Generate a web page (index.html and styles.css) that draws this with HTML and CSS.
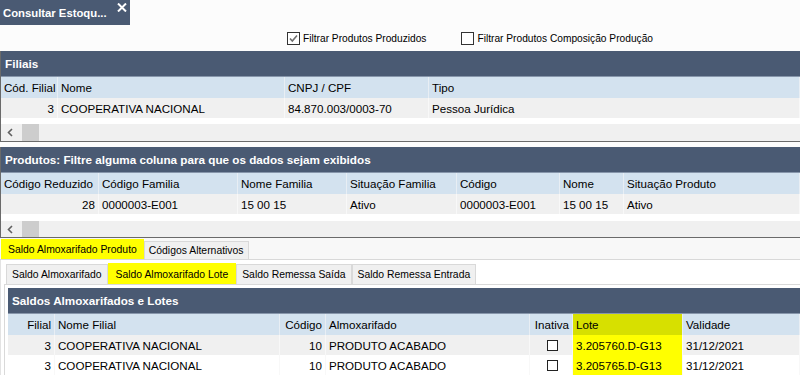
FILE: index.html
```html
<!DOCTYPE html>
<html lang="pt-BR">

<head>
    <meta charset="UTF-8">
    <meta name="viewport" content="width=device-width, initial-scale=1.0">
    <title>Consultar Estoque</title>
    <link rel="stylesheet" href="styles.css">
</head>

<body>
    <div class="title-tab">
        <span class="title-text">Consultar Estoqu...</span>
        <svg class="close" width="10" height="9" viewBox="0 0 10 9">
            <path d="M1 0.5 L9 8.5 M9 0.5 L1 8.5" stroke="#fff" stroke-width="2" />
        </svg>
    </div>

    <div class="filters">
        <label class="check">
            <svg width="13" height="13" viewBox="0 0 13 13">
                <rect x="0.5" y="0.5" width="12" height="12" fill="#fff" stroke="#333" />
                <path d="M3 6.5 L5.3 9 L10 3.5" fill="none" stroke="#6f6f6f" stroke-width="1.6" />
            </svg>
            Filtrar Produtos Produzidos
        </label>
        <label class="check">
            <svg width="13" height="13" viewBox="0 0 13 13">
                <rect x="0.5" y="0.5" width="12" height="12" fill="#fff" stroke="#333" />
            </svg>
            Filtrar Produtos Composição Produção
        </label>
    </div>

    <!-- filiais -->
    <section class="panel">
        <div class="panel-head">Filiais</div>
        <div class="grid g-filiais col-head">
            <div class="cell">Cód. Filial</div>
            <div class="cell">Nome</div>
            <div class="cell">CNPJ / CPF</div>
            <div class="cell">Tipo</div>
        </div>
        <div class="grid g-filiais row odd">
            <div class="cell num">3</div>
            <div class="cell">COOPERATIVA NACIONAL</div>
            <div class="cell">84.870.003/0003-70</div>
            <div class="cell">Pessoa Jurídica</div>
        </div>
        <div class="spacer"></div>
        <div class="hscroll">
            <svg class="arrow" width="8" height="9" viewBox="0 0 8 9">
                <path d="M6 1 L2.5 4.5 L6 8" fill="none" stroke="#606060" stroke-width="1.6" />
            </svg>
            <span class="thumb"></span>
        </div>
    </section>

    <!-- produtos -->
    <section class="panel">
        <div class="panel-head">Produtos: Filtre alguma coluna para que os dados sejam exibidos</div>
        <div class="grid g-produtos col-head">
            <div class="cell">Código Reduzido</div>
            <div class="cell">Código Familia</div>
            <div class="cell">Nome Familia</div>
            <div class="cell">Situação Familia</div>
            <div class="cell">Código</div>
            <div class="cell">Nome</div>
            <div class="cell">Situação Produto</div>
        </div>
        <div class="grid g-produtos row odd">
            <div class="cell num">28</div>
            <div class="cell">0000003-E001</div>
            <div class="cell">15 00 15</div>
            <div class="cell">Ativo</div>
            <div class="cell">0000003-E001</div>
            <div class="cell">15 00 15</div>
            <div class="cell">Ativo</div>
        </div>
        <div class="spacer tall"></div>
        <div class="hscroll">
            <svg class="arrow" width="8" height="9" viewBox="0 0 8 9">
                <path d="M6 1 L2.5 4.5 L6 8" fill="none" stroke="#606060" stroke-width="1.6" />
            </svg>
            <span class="thumb"></span>
        </div>
    </section>

    <!-- abas -->
    <div class="tabs outer-tabs">
        <div class="tab active">Saldo Almoxarifado Produto</div>
        <div class="tab">Códigos Alternativos</div>
    </div>
    <div class="outer-page">
        <div class="tabs inner-tabs">
            <div class="tab">Saldo Almoxarifado</div>
            <div class="tab active">Saldo Almoxarifado Lote</div>
            <div class="tab">Saldo Remessa Saída</div>
            <div class="tab">Saldo Remessa Entrada</div>
        </div>
        <div class="inner-page">
            <div class="panel-head">Saldos Almoxarifados e Lotes</div>
            <div class="grid g-lotes col-head">
                <div class="cell num">Filial</div>
                <div class="cell">Nome Filial</div>
                <div class="cell num">Código</div>
                <div class="cell">Almoxarifado</div>
                <div class="cell num">Inativa</div>
                <div class="cell lote-head">Lote</div>
                <div class="cell">Validade</div>
            </div>
            <div class="grid g-lotes row odd">
                <div class="cell num">3</div>
                <div class="cell">COOPERATIVA NACIONAL</div>
                <div class="cell num">10</div>
                <div class="cell">PRODUTO ACABADO</div>
                <div class="cell center"><span class="box"></span></div>
                <div class="cell lote">3.205760.D-G13</div>
                <div class="cell">31/12/2021</div>
            </div>
            <div class="grid g-lotes row">
                <div class="cell num">3</div>
                <div class="cell">COOPERATIVA NACIONAL</div>
                <div class="cell num">10</div>
                <div class="cell">PRODUTO ACABADO</div>
                <div class="cell center"><span class="box"></span></div>
                <div class="cell lote">3.205765.D-G13</div>
                <div class="cell">31/12/2021</div>
            </div>
        </div>
    </div>
</body>

</html>
```

FILE: styles.css
```css
* {
    box-sizing: border-box;
}

body {
    margin: 0;
    width: 800px;
    height: 375px;
    overflow: hidden;
    background-color: #fcfcfc;
    font-family: "Liberation Sans", Arial, sans-serif;
    font-size: 11.6px;
    color: #000;
}

/* aba do titulo */
.title-tab {
    width: 130px;
    height: 25px;
    background-color: #4a5a73;
    color: #fff;
    font-weight: bold;
    font-size: 11.3px;
    display: flex;
    align-items: flex-start;
    padding: 7px 0 0 3px;
    position: relative;
}

.close {
    position: absolute;
    left: 117px;
    top: 3px;
}

.filters {
    height: 26px;
    display: flex;
    align-items: center;
    padding-left: 287px;
    gap: 35px;
    font-size: 10.2px;
}

.check {
    display: flex;
    align-items: center;
    gap: 2px;
}

.check svg {
    margin-right: 1px;
}

/* paineis */
.panel {
    border-left: 1px solid #6a6a6a;
    border-bottom: 1px solid #6a6a6a;
    background-color: #fff;
}

.panel + .panel {
    margin-top: 5px;
}

.panel-head {
    height: 26px;
    background-color: #4a5a73;
    color: #fff;
    font-weight: bold;
    font-size: 11.7px;
    display: flex;
    align-items: center;
    padding-left: 4px;
    border-bottom: 1px solid #8796ab;
}

.grid {
    display: grid;
    height: 20px;
}

.col-head {
    height: 21px;
    background-color: #d3e2ef;
}

.row {
    background-color: #fff;
}

.row.odd {
    background-color: #f0f0f0;
}

.cell {
    display: flex;
    align-items: center;
    padding: 0 3px;
    white-space: nowrap;
    overflow: hidden;
    border-right: 1px solid #e8eef4;
}

.row .cell {
    border-right-color: #f8f8f8;
}

.cell.num {
    justify-content: flex-end;
}

.cell.center {
    justify-content: center;
}

.g-filiais {
    grid-template-columns: 57px 227px 144px 1fr;
}

.g-produtos {
    grid-template-columns: 98px 139px 109px 110px 103px 64px 1fr;
}

.g-lotes {
    grid-template-columns: 47px 225px 46px 204px 43px 110px 1fr;
}

.spacer {
    height: 6px;
}

.spacer.tall {
    height: 7px;
}

.hscroll {
    height: 17px;
    background-color: #f0f0f0;
    display: flex;
    align-items: stretch;
}

.spacer.tall + .hscroll {
    height: 16px;
}

.arrow {
    align-self: center;
    margin: 0 8px 0 5px;
}

.thumb {
    width: 17px;
    background-color: #cdcdcd;
}

/* abas */
.tabs {
    display: flex;
    align-items: flex-end;
    font-size: 10.4px;
}

.outer-tabs {
    height: 22px;
    background-color: #f8f8f8;
    border-bottom: 1px solid #d9d9d9;
    padding-left: 1px;
}

.tab {
    height: 18px;
    padding: 0 4px;
    display: flex;
    align-items: center;
    background-color: #f0f0f0;
    border: 1px solid #d9d9d9;
    border-bottom: none;
}

.tab.active {
    height: 20px;
    background-color: #ffff00;
    border-color: #ffff00;
}

.outer-tabs .tab {
    padding: 0 4px;
}

.outer-tabs .tab.active {
    padding: 0 6px;
}

.outer-page {
    background-color: #fff;
    border-left: 1px solid #e3e3e3;
}

.inner-tabs {
    height: 24px;
    padding-left: 5px;
}

.inner-tabs .tab {
    height: 20px;
    padding: 0 5px;
}

.inner-tabs .tab.active {
    height: 21px;
    padding: 0 7px;
}

.inner-page {
    margin-left: 3px;
    border-left: 1px solid #d9d9d9;
    border-top: 1px solid #d9d9d9;
    padding: 3px 0 0 3px;
}

.lote-head {
    background-color: #d7e000;
}

.lote {
    background-color: #ffff00;
}

.box {
    width: 11px;
    height: 11px;
    border: 1px solid #222;
    background-color: #fff;
    margin-left: 3px;
}
```
